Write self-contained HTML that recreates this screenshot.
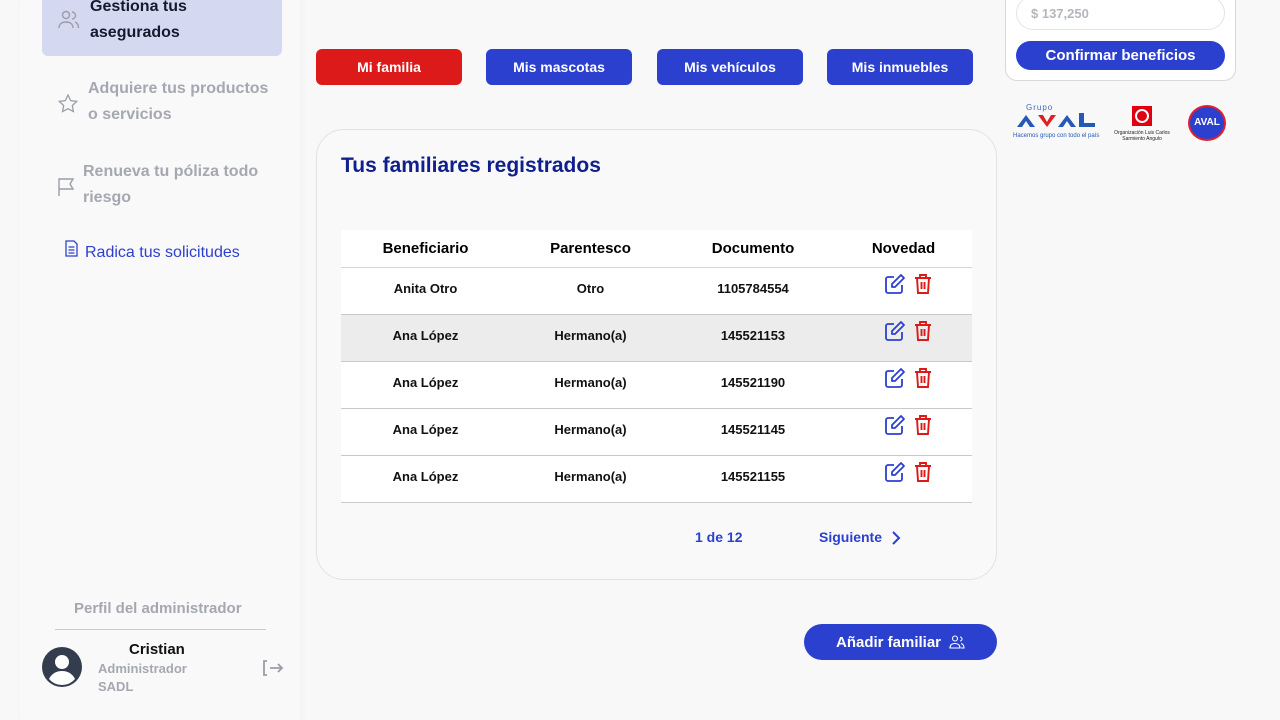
<!DOCTYPE html>
<html><head><meta charset="utf-8"><style>
*{margin:0;padding:0;box-sizing:border-box}
body{width:1280px;height:720px;overflow:hidden;background:#f8f8f8;font-family:"Liberation Sans",sans-serif;position:relative}
.a{position:absolute}
.side{left:20px;top:0;width:280px;height:720px;background:#f9f9f9;box-shadow:2px 0 8px rgba(0,0,0,.03)}
.nav{font-weight:bold;font-size:16px;line-height:26px;color:#a5a8b0}
.btn{position:absolute;top:49px;width:146px;height:36px;border-radius:6px;color:#fff;font-weight:bold;font-size:14px;display:flex;align-items:center;justify-content:center;background:#2c40cf}
.card{left:316px;top:129px;width:681px;height:451px;border:1px solid #e2e2e2;border-radius:28px;background:#f9f9f9}
table{position:absolute;left:341px;top:230px;width:631px;border-collapse:collapse;table-layout:fixed}
th{height:37px;background:#fff;font-size:15px;color:#000;border-bottom:1px solid #d5d5d5}
td{height:47px;font-size:13px;font-weight:bold;text-align:center;border-bottom:1px solid #c9c9c9;background:#fff;color:#111;padding-bottom:4px}
tr.g td{background:#ececec}
td svg{vertical-align:middle}
</style></head><body>
<div class="a side"></div>
<div class="a" style="left:42px;top:-10px;width:240px;height:66px;background:#d4d8f1;border-radius:6px"></div>
<svg class="a" style="left:58px;top:10px" width="22" height="20" viewBox="0 0 22 20" fill="none" stroke="#9a9ea8" stroke-width="1.4"><circle cx="8" cy="5" r="3.5"/><path d="M1 18c0-4 3-6 7-6s7 2 7 6M14 2a3.5 3.5 0 010 7M17 12c2 .8 3.5 2.6 3.5 6"/></svg>
<div class="a nav" style="left:90px;top:-6px;color:#151a2e">Gestiona tus<br>asegurados</div>
<svg class="a" style="left:58px;top:94px" width="20" height="19" viewBox="0 0 20 19" fill="none" stroke="#9a9ea8" stroke-width="1.3"><path d="M10 1l2.7 5.6 6 .8-4.4 4.2 1.1 6-5.4-2.9-5.4 2.9 1.1-6L1.3 7.4l6-.8z"/></svg>
<div class="a nav" style="left:88px;top:76px">Adquiere tus productos<br>o servicios</div>
<svg class="a" style="left:57px;top:177px" width="18" height="20" viewBox="0 0 18 20" fill="none" stroke="#9a9ea8" stroke-width="1.4"><path d="M2 19V2h14l-3 5 3 5H2"/></svg>
<div class="a nav" style="left:83px;top:159px">Renueva tu póliza todo<br>riesgo</div>
<svg class="a" style="left:65px;top:240px" width="13" height="17" viewBox="0 0 13 17" fill="none" stroke="#2c40cf" stroke-width="1.3"><path d="M1 1h8l3 3v12H1z M3.5 7h6M3.5 10h6M3.5 13h6"/></svg>
<div class="a" style="left:85px;top:244px;font-size:16px;color:#2c40cf">Radica tus solicitudes</div>
<div class="a nav" style="left:74px;top:596px;font-size:15px">Perfil del administrador</div>
<div class="a" style="left:55px;top:629px;width:211px;height:1px;background:#c8c8d8"></div>
<svg class="a" style="left:42px;top:647px" width="40" height="40" viewBox="0 0 40 40"><circle cx="20" cy="20" r="20" fill="#333d4e"/><circle cx="20" cy="15" r="7" fill="#fff"/><path d="M7 32c3-6 8-8 13-8s10 2 13 8a17 17 0 01-26 0z" fill="#fff"/></svg>
<div class="a" style="left:129px;top:641px;font-weight:bold;font-size:15px;color:#111">Cristian</div>
<div class="a" style="left:98px;top:660px;font-weight:bold;font-size:13px;line-height:18px;color:#a5a8b0">Administrador<br>SADL</div>
<svg class="a" style="left:262px;top:659px" width="22" height="18" viewBox="0 0 22 18" fill="none" stroke="#9a9ea8" stroke-width="1.8"><path d="M5 2H2v14h3M8 9h12M16 5l4 4-4 4"/></svg>

<div class="btn" style="left:316px;background:#dc1a1a">Mi familia</div>
<div class="btn" style="left:486px">Mis mascotas</div>
<div class="btn" style="left:657px">Mis vehículos</div>
<div class="btn" style="left:827px">Mis inmuebles</div>

<div class="a card"></div>
<div class="a" style="left:341px;top:154px;font-weight:bold;font-size:21px;color:#0f1f8c">Tus familiares registrados</div>
<table>
<colgroup><col style="width:169px"><col style="width:161px"><col style="width:164px"><col style="width:137px"></colgroup>
<tr><th>Beneficiario</th><th>Parentesco</th><th>Documento</th><th>Novedad</th></tr>
<tr><td>Anita Otro</td><td>Otro</td><td>1105784554</td><td class="ic"></td></tr>
<tr class="g"><td>Ana López</td><td>Hermano(a)</td><td>145521153</td><td class="ic"></td></tr>
<tr><td>Ana López</td><td>Hermano(a)</td><td>145521190</td><td class="ic"></td></tr>
<tr><td>Ana López</td><td>Hermano(a)</td><td>145521145</td><td class="ic"></td></tr>
<tr><td>Ana López</td><td>Hermano(a)</td><td>145521155</td><td class="ic"></td></tr>
</table>
<div class="a" style="left:695px;top:529px;font-weight:bold;font-size:14px;color:#2c40cf">1 de 12</div>
<div class="a" style="left:819px;top:529px;font-weight:bold;font-size:14px;color:#2c40cf">Siguiente</div>
<svg class="a" style="left:891px;top:531px" width="10" height="14" viewBox="0 0 10 14" fill="none" stroke="#2c40cf" stroke-width="2"><path d="M2 1l6 6-6 6"/></svg>
<div class="a" style="left:804px;top:624px;width:193px;height:36px;border-radius:18px;background:#2c40cf;color:#fff;font-weight:bold;font-size:15px;display:flex;align-items:center;justify-content:center;gap:8px">Añadir familiar <svg width="16" height="14" viewBox="0 0 16 14" fill="none" stroke="#fff" stroke-width="1.1"><circle cx="6" cy="3.5" r="2.5"/><path d="M1 13c0-3 2-4.5 5-4.5s5 1.5 5 4.5zM11 2a2 2 0 010 4M12 8.5c2 .5 3 2 3 4.5h-3"/></svg></div>

<div class="a" style="left:1005px;top:-20px;width:231px;height:101px;border:1px solid #d8d8d8;border-radius:12px;background:#fff"></div>
<div class="a" style="left:1016px;top:-4px;width:209px;height:34px;border:1px solid #e0e4ea;border-radius:17px;background:#fff;color:#b3b6bd;font-weight:bold;font-size:13px;padding:9px 0 0 14px">$ 137,250</div>
<div class="a" style="left:1016px;top:41px;width:209px;height:29px;border-radius:15px;background:#2c40cf;color:#fff;font-weight:bold;font-size:15px;display:flex;align-items:center;justify-content:center">Confirmar beneficios</div>
<div class="a" style="left:1026px;top:103px;font-size:8px;color:#3a68c0;letter-spacing:1px">Grupo</div>
<svg class="a" style="left:1016px;top:111px" width="80" height="17" viewBox="0 0 80 17"><path d="M1 16L10 4l9 12h-5l-4-6-4 6z" fill="#2658b8"/><path d="M22 4h5l4 7 4-7h5l-9 12z" fill="#e02020"/><path d="M42 16l9-12 9 12h-5l-4-6-4 6z" fill="#2658b8"/><path d="M63 2h5v10h11v4H63z" fill="#2658b8"/></svg>
<div class="a" style="left:1013px;top:133px;font-size:6px;color:#2658b8;white-space:nowrap">Hacemos grupo con todo el país</div>
<div class="a" style="left:1132px;top:106px;width:20px;height:20px;background:#e00010"></div>
<div class="a" style="left:1135px;top:109px;width:14px;height:14px;border:2px solid #fff;border-radius:50%"></div>
<div class="a" style="left:1112px;top:130px;font-size:5px;line-height:6px;color:#222;text-align:center;width:60px">Organización Luis Carlos Sarmiento Angulo</div>
<div class="a" style="left:1188px;top:105px;width:38px;height:36px;border-radius:50%;background:#2c40cf;border:2px solid #e02030"></div>
<div class="a" style="left:1190px;top:117px;font-size:10px;font-weight:bold;color:#fff;width:34px;text-align:center">AVAL</div>
<script>
var ed='<svg width="22" height="22" viewBox="0 0 22 22" fill="none" stroke="#2c40cf" stroke-width="1.8" stroke-linejoin="round"><path d="M10 4H4a2 2 0 00-2 2v12a2 2 0 002 2h12a2 2 0 002-2v-6"/><path d="M17 2l3 3-9 9H8v-3z"/></svg>';
var tr='<svg width="20" height="22" viewBox="0 0 20 22" fill="none" stroke="#dc1a1a" stroke-width="1.9"><path d="M2 5h16M7 5V2h6v3M4 5l1 15h10l1-15M8.5 9v7M11.5 9v7"/></svg>';
document.querySelectorAll('.ic').forEach(function(e){e.innerHTML=ed+' &nbsp;'+tr;e.style.padding='0 0 14px 10px'});
</script>
</body></html>
